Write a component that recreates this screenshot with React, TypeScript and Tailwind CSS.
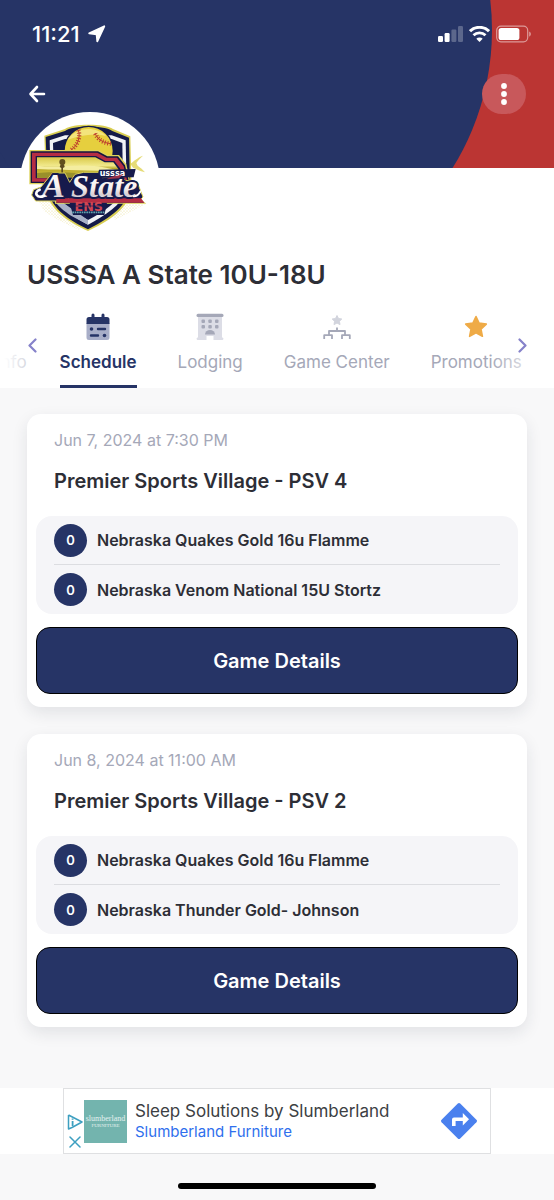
import React from "react";

const navy = "#263466";

function StatusBar() {
  return (
    <div className="flex h-[68px] items-center justify-between pl-8 pr-[23px] text-white">
      <div className="flex items-center gap-2">
        <span className="text-[22px] leading-6 font-medium">11:21</span>
        <svg width="18" height="18" viewBox="0 0 18 18" fill="currentColor" stroke="currentColor" strokeLinejoin="round" aria-hidden="true">
          <path d="M1.200 8.400 16.300 1.300 9.300 16.300 8.600 9.300Z" strokeWidth="1.800" />
        </svg>
      </div>
      <div className="flex items-center gap-[6px]">
        <svg width="25" height="16" viewBox="0 0 25 16" fill="currentColor" aria-hidden="true">
          <rect x="0" y="10" width="5" height="6" rx="1.200" />
          <rect x="6.600" y="7" width="5" height="9" rx="1.200" />
          <rect x="13.400" y="3.500" width="5" height="12.500" rx="1.200" opacity=".25" />
          <rect x="20" y="0" width="5" height="16" rx="1.200" opacity=".25" />
        </svg>
        <svg width="21" height="16" viewBox="0 0 21 16" fill="none" stroke="currentColor" aria-hidden="true">
          <path d="M1 5.200a13.600 13.600 0 0 1 19 0" strokeWidth="3" />
          <path d="M4.500 9.300a8.600 8.600 0 0 1 12 0" strokeWidth="2.800" />
          <path d="M10.500 16 7.300 12.700a4.600 4.600 0 0 1 6.400 0Z" fill="currentColor" stroke="none" />
        </svg>
        <svg width="35" height="18" viewBox="0 0 35 18" aria-hidden="true">
          <rect x="0.700" y="1.200" width="31" height="15.600" rx="4.200" fill="none" stroke="#fff" strokeOpacity=".5" strokeWidth="1.200" />
          <rect x="2.600" y="3" width="20.800" height="12" rx="2.600" fill="#fff" />
          <path d="M33.200 6.400c2.200.8 2.200 4.400 0 5.200Z" fill="#fff" fillOpacity=".5" />
        </svg>
      </div>
    </div>
  );
}

function TeamLogo() {
  return (
    <svg className="block h-full w-full" viewBox="15 21 420 420" role="img" aria-label="USSSA A State">
      <defs>
        <pattern id="dots" width="9" height="9" patternUnits="userSpaceOnUse">
          <circle cx="3" cy="3" r="1.700" fill="#e5dc8a" />
          <circle cx="7.500" cy="7.500" r="1.300" fill="#ece6ad" />
        </pattern>
        <linearGradient id="field" x1="0" y1="0" x2="0" y2="1">
          <stop offset="0" stopColor="#d9c94a" />
          <stop offset=".4" stopColor="#f0e88a" />
          <stop offset=".55" stopColor="#b9a92c" />
          <stop offset="1" stopColor="#d5c43c" />
        </linearGradient>
        <linearGradient id="chrome" x1="0" y1="0" x2="0" y2="1">
          <stop offset="0" stopColor="#fff" />
          <stop offset=".55" stopColor="#f8f2f0" />
          <stop offset=".75" stopColor="#d6cdd2" />
          <stop offset="1" stopColor="#fff" />
        </linearGradient>
      </defs>
      <path d="M60 268 120 270 205 365 190 375 130 345 88 320Z" fill="url(#dots)" />
      <path d="M350 280 392 298 340 325 300 345 290 330Z" fill="url(#dots)" />
      <path d="M346 176c10-6 20-18 38-24-8 8-14 12-20 22l4 8c8 6 14 10 22 20-16-4-28-10-36-14Z" fill="#e6dc78" />
      {/* shield */}
      <path d="M88 92 150 72C170 55 272 55 294 72L346 94 350 260C332 318 276 350 219 378 158 350 108 318 94 262Z" fill="#d9ce52" />
      <path d="M92 96 150 78C172 60 270 60 292 78L342 98 345 258C328 312 272 346 219 373 162 346 112 312 98 258Z" fill="#141a48" />
      <path d="M104 106 150 91H290L332 106 335 256C318 302 270 332 219 359 168 332 122 302 108 256Z" fill="#f1f2f6" />
      <path d="M114 114 150 102H290L322 114 324 252C310 292 264 322 219 345 174 322 132 292 118 252Z" fill="#141a48" />
      <path d="M219 359 168 332C148 318 126 304 112 276L140 290 219 345Z" fill="#a9b1c8" />
      {/* softball */}
      <circle cx="221" cy="138" r="76" fill="#141a48" />
      <circle cx="221" cy="138" r="72" fill="#e6cf3e" />
      <path d="M158 105c20-36 80-46 116-12-28-8-80-4-116 12Z" fill="#f3e47c" />
      <path d="M190 75c8 24-4 48-24 62M288 116c-24-2-42-14-48-32" fill="none" stroke="#b8392c" strokeWidth="3" />
      <path d="M190 75c8 24-4 48-24 62M288 116c-24-2-42-14-48-32" fill="none" stroke="#c0412f" strokeWidth="13" strokeDasharray="3 5" />
      {/* Nebraska outline */}
      <path d="M43 135H250L278 150 312 150 334 178 344 222 352 262 394 296H120L118 238H43Z" fill="#ddd25a" />
      <path d="M47 139H249L277 154 309 154 330 181 340 222 349 265 388 293H124L122 234H47Z" fill="#14143f" />
      <path d="M51 143H247L275 158 306 158 326 184 336 224 346 268 378 289H128L126 230H51Z" fill="#b52d43" />
      <path d="M62 153H243L271 168 298 168 315 190 322 222 334 270 348 279H134L134 220H62Z" fill="#15184a" />
      <path d="M66 157H241L269 172 295 172 310 192 313 216 66 218Z" fill="url(#field)" />
      <path d="M66 182C130 190 180 176 250 184L311 196V203C220 192 160 198 66 192Z" fill="#f4eda0" />
      <path d="M66 204C110 198 180 204 220 206L214 216 66 218Z" fill="#99902b" />
      <circle cx="142" cy="171" r="9" fill="#62501d" />
      <path d="M137 178h10l2 8-5 3v20h-5v-20l-5-3Z" fill="#5c4b20" />
      {/* lettering */}
      <path d="M112 204H150L164 232 180 208 206 202 250 202 262 218 312 214 330 226 366 230 384 276 372 288H172L160 282 148 288H62L50 270 56 254 78 246Z" fill="#161a4c" stroke="#ddd25a" strokeWidth="3" strokeLinejoin="round" />
      <path d="M124 280H378L388 293H124Z" fill="#b52d43" />
      <path d="M252 194 362 192 356 217 246 219Z" fill="#161a4c" />
      <g fontFamily="Liberation Serif, serif" fontWeight="700" fontStyle="italic" fill="url(#chrome)" stroke="#161a4c" strokeWidth="12" strokeLinejoin="round" style={{ paintOrder: "stroke" }}>
        <text x="80" y="276" fontSize="104">A</text>
        <text x="168" y="276" fontSize="97">State</text>
      </g>
      <path d="M88 272C66 282 54 262 74 254" fill="none" stroke="#fff" strokeWidth="8" strokeLinecap="round" />
      <path d="M356 274C366 274 372 268 376 260" fill="none" stroke="#fff" strokeWidth="6" strokeLinecap="round" />
      <text x="254" y="213" fontFamily="DejaVu Sans, sans-serif" fontSize="24" fontWeight="700" fill="#fff">usssa</text>
      <path d="M288 216 326 207 312 220 274 223Z" fill="#c43a4b" fillOpacity=".75" />
      <path d="M164 294H276L268 330H174Z" fill="#161a4c" />
      <text x="221" y="317" textAnchor="middle" fontFamily="DejaVu Sans, sans-serif" fontSize="38" fontWeight="700" fill="#cf4452">ENS</text>
      <path d="M170 303H272" stroke="#161a4c" strokeWidth="2" />
      <path d="M172 322H270" stroke="#5fa3ad" strokeWidth="5" strokeDasharray="5 2" />
    </svg>
  );
}

function CalendarIcon() {
  return (
    <svg width="24" height="28" viewBox="0 0 24 28" aria-hidden="true">
      <path d="M.5 10h23v14.500a2.500 2.500 0 0 1-2.500 2.500H3a2.500 2.500 0 0 1-2.500-2.500Z" fill="#a8aec8" />
      <path d="M3 4h2.500V2a1.500 1.500 0 0 1 3 0v2h7V2a1.500 1.500 0 0 1 3 0v2H21a2.500 2.500 0 0 1 2.500 2.500V11H.5V6.500A2.500 2.500 0 0 1 3 4Z" fill={navy} />
      <g stroke={navy} strokeWidth="2.400" strokeLinecap="round">
        <path d="M12 16h7M5 22.500h7" />
      </g>
      <circle cx="5.500" cy="16" r="1.800" fill={navy} />
      <circle cx="18.500" cy="22.500" r="1.800" fill={navy} />
    </svg>
  );
}

function HotelIcon() {
  return (
    <svg width="28" height="28" viewBox="0 0 28 28" aria-hidden="true">
      <path d="M2 3h24v21.500h.5a1.300 1.300 0 0 1 0 2.500H17.500v-4h-7v4H1.500a1.300 1.300 0 0 1 0-2.500H2Z" fill="#dcdde6" />
      <rect x=".5" y=".8" width="27" height="3.200" rx="1.500" fill="#a5a8b8" />
      <g fill="#a5a8b8">
        <rect x="5.500" y="6.500" width="3.500" height="3.500" rx="1" />
        <rect x="12.300" y="6.500" width="3.500" height="3.500" rx="1" />
        <rect x="19" y="6.500" width="3.500" height="3.500" rx="1" />
        <rect x="5.500" y="12" width="3.500" height="3.500" rx="1" />
        <rect x="12.300" y="12" width="3.500" height="3.500" rx="1" />
        <rect x="19" y="12" width="3.500" height="3.500" rx="1" />
        <path d="M9 21.500a5 4.500 0 0 1 10 0Z" />
      </g>
    </svg>
  );
}

function BracketIcon() {
  return (
    <svg width="28" height="28" viewBox="0 0 28 28" aria-hidden="true">
      <path d="m14 2.500 1.500 3 3.300.5-2.400 2.300.6 3.300-3-1.600-3 1.600.6-3.300L9.200 6l3.300-.5Z" fill="#d2d4dd" stroke="#d2d4dd" strokeLinejoin="round" />
      <path d="M14 14.500v3.500M6 22v-4h16v4M1.200 26v-3.800H9V26M19 26v-3.800h7.800V26" fill="none" stroke="#a5a8b8" strokeWidth="1.800" strokeLinejoin="round" />
    </svg>
  );
}

function StarIcon() {
  return (
    <svg width="24" height="28" viewBox="0 0 24 28" aria-hidden="true">
      <path d="m12 3.500 3.100 6.600 7.200 1-5.300 5 1.400 7.200L12 19.800l-6.400 3.500L7 16.100l-5.300-5 7.200-1Z" fill="#efab47" stroke="#efab47" strokeWidth="1.600" strokeLinejoin="round" />
    </svg>
  );
}

const tabs = [
  { label: "Info", icon: null },
  { label: "Schedule", icon: <CalendarIcon /> },
  { label: "Lodging", icon: <HotelIcon /> },
  { label: "Game Center", icon: <BracketIcon /> },
  { label: "Promotions", icon: <StarIcon /> },
];

function Tabs() {
  return (
    <nav className="relative mt-[22px]" aria-label="Event sections">
      <div className="-ml-1 flex gap-[41px] overflow-hidden">
        {tabs.map((tab) => {
          const active = tab.label === "Schedule";
          return (
            <a
              key={tab.label}
              href="#"
              aria-current={active ? "page" : undefined}
              className={
                active
                  ? "flex h-[75px] shrink-0 flex-col items-center gap-[9px] border-b-3 border-[#263466] text-[17px] leading-6 font-semibold text-[#263466]"
                  : "flex h-[75px] shrink-0 flex-col items-center gap-[9px] border-b-3 border-transparent text-[17px] leading-6 text-[#a5a8b8] first:-mr-2"
              }
            >
              <span className="flex h-7 items-center">{tab.icon}</span>
              <span>{tab.label}</span>
            </a>
          );
        })}
      </div>
      <div className="pointer-events-none absolute inset-y-0 left-0 w-11 bg-linear-to-r from-white from-10% to-white/20" />
      <div className="pointer-events-none absolute inset-y-0 right-0 w-16 bg-linear-to-l from-white from-10% to-white/0" />
      <button aria-label="Previous" className="absolute top-5 left-6 flex h-6 w-4 items-center justify-center">
        <svg width="9" height="15" viewBox="0 0 9 15" fill="none" stroke="#8682ca" strokeWidth="2.200" strokeLinecap="round" strokeLinejoin="round">
          <path d="M7.500 1.500 1.500 7.500l6 6" />
        </svg>
      </button>
      <button aria-label="Next" className="absolute top-5 right-6 flex h-6 w-4 items-center justify-center">
        <svg width="9" height="15" viewBox="0 0 9 15" fill="none" stroke="#8682ca" strokeWidth="2.200" strokeLinecap="round" strokeLinejoin="round">
          <path d="m1.500 1.500 6 6-6 6" />
        </svg>
      </button>
    </nav>
  );
}

const games = [
  { date: "Jun 7, 2024 at 7:30 PM", venue: "Premier Sports Village - PSV 4", teams: ["Nebraska Quakes Gold 16u Flamme", "Nebraska Venom National 15U Stortz"] },
  { date: "Jun 8, 2024 at 11:00 AM", venue: "Premier Sports Village - PSV 2", teams: ["Nebraska Quakes Gold 16u Flamme", "Nebraska Thunder Gold- Johnson"] },
];

function GameCard({ game }: { game: (typeof games)[number] }) {
  return (
    <article className="rounded-[14px] bg-white px-[9px] pt-[14px] pb-[13px] shadow-[0_6px_16px_rgba(30,40,60,0.10)]">
      <p className="px-[18px] text-[16px] leading-6 text-[#a5a8b8]">{game.date}</p>
      <h2 className="mt-[17px] px-[18px] text-[20px] leading-6 font-semibold text-[#2d2e36]">{game.venue}</h2>
      <ul className="mt-[23px] rounded-[16px] bg-[#f5f5f8] px-[18px]">
        {game.teams.map((team) => (
          <li key={team} className="flex h-[49px] items-center gap-[10px] border-[#dcdde1] text-[16px] leading-6 font-semibold text-[#2d2e36] first:border-b">
            <span className="flex size-[33px] items-center justify-center rounded-full bg-[#263466] text-[13px] text-white">0</span>
            <span>{team}</span>
          </li>
        ))}
      </ul>
      <button className="mt-[13px] flex h-[67px] w-full items-center justify-center rounded-[14px] border border-black bg-[#263466] text-[20px] font-semibold text-white">
        Game Details
      </button>
    </article>
  );
}

function AdBanner() {
  return (
    <aside className="mt-[61px] flex justify-center bg-white">
      <div className="flex h-[66px] w-[428px] max-w-full items-center border border-[#dfe0e2] bg-white pr-[13px] pl-[2px]">
        <div className="flex w-[17px] flex-col items-center gap-[6px] pt-[20px]">
          <svg width="16" height="16" viewBox="0 0 16 16" fill="none" stroke="#3d9fc0" strokeWidth="1.500" strokeLinejoin="round" aria-hidden="true">
            <path d="M1.500 1 15 8 5 13.500M1.500 1v14L5 13.500" />
            <path d="M5.600 7v5M5.600 4.500v1.200" strokeWidth="1.800" />
          </svg>
          <button aria-label="Close ad" className="block">
            <svg width="12" height="12" viewBox="0 0 12 12" fill="none" stroke="#3d9fc0" strokeWidth="1.500" strokeLinecap="round">
              <path d="m1 1 10 10M11 1 1 11" />
            </svg>
          </button>
        </div>
        <div className="ml-px flex size-[43px] flex-col items-center justify-center bg-[#73b4ae] text-white/80">
          <span className="font-['Liberation_Serif',serif] text-[8px] leading-[8px]">slumberland</span>
          <span className="font-['Liberation_Serif',serif] text-[5px] leading-[5px]">FURNITURE</span>
        </div>
        <div className="ml-2 flex flex-1 flex-col">
          <span className="text-[17px] leading-[22px] text-[#3c4043]">Sleep Solutions by Slumberland</span>
          <a href="#" className="text-[15px] leading-5 text-[#2f6fed]">Slumberland Furniture</a>
        </div>
        <a href="#" aria-label="Directions">
          <svg width="36" height="36" viewBox="0 0 36 36" aria-hidden="true">
            <path d="M16.800.6a1.700 1.700 0 0 1 2.400 0l16.200 16.200a1.700 1.700 0 0 1 0 2.400L19.200 35.400a1.700 1.700 0 0 1-2.400 0L.6 19.200a1.700 1.700 0 0 1 0-2.400Z" fill="#4a80ee" />
            <path d="M11 23v-6.500a2 2 0 0 1 2-2h8.800V10l6.200 6.300-6.200 6.200V18h-7.200v5Z" fill="#fff" />
          </svg>
        </a>
      </div>
    </aside>
  );
}

export default function App() {
  return (
    <div className="flex min-h-screen flex-col bg-[#f8f8f9] font-['Inter',sans-serif]">
      <header className="relative h-[168px] overflow-hidden bg-[#bb3533]">
        <svg className="absolute inset-0 h-full w-full" aria-hidden="true">
          <rect width="231" height="168" fill={navy} />
          <circle cx="231" cy="30" r="261" fill={navy} />
        </svg>
        <div className="relative">
          <StatusBar />
          <div className="flex items-center justify-between px-7 pt-[6px]">
            <button aria-label="Back" className="text-white">
              <svg width="18" height="18" viewBox="0 0 18 18" fill="none" stroke="currentColor" strokeWidth="2.600" strokeLinecap="round" strokeLinejoin="round">
                <path d="M9 2 2.500 9 9 16M2.800 9h13.200" />
              </svg>
            </button>
            <button aria-label="More options" className="flex h-10 w-11 items-center justify-center rounded-full bg-[#c8585b]">
              <svg width="6" height="22" viewBox="0 0 6 22" fill="#fff">
                <circle cx="3" cy="3" r="2.900" />
                <circle cx="3" cy="11" r="2.900" />
                <circle cx="3" cy="19" r="2.900" />
              </svg>
            </button>
          </div>
        </div>
      </header>
      <section className="bg-white">
        <div className="relative -mt-14 ml-5 size-[140px] rounded-full bg-white">
          <TeamLogo />
        </div>
        <h1 className="mt-[7px] px-[27px] text-[26px] leading-8 font-semibold text-[#2d2e36]">USSSA A State 10U-18U</h1>
        <Tabs />
      </section>
      <main className="flex flex-col gap-[27px] px-[27px] pt-[26px]">
        {games.map((game) => (
          <GameCard key={game.date} game={game} />
        ))}
      </main>
      <AdBanner />
      <div className="mt-[29px] mb-[11px] flex justify-center">
        <div className="h-[6px] w-[198px] rounded-full bg-black" />
      </div>
    </div>
  );
}
